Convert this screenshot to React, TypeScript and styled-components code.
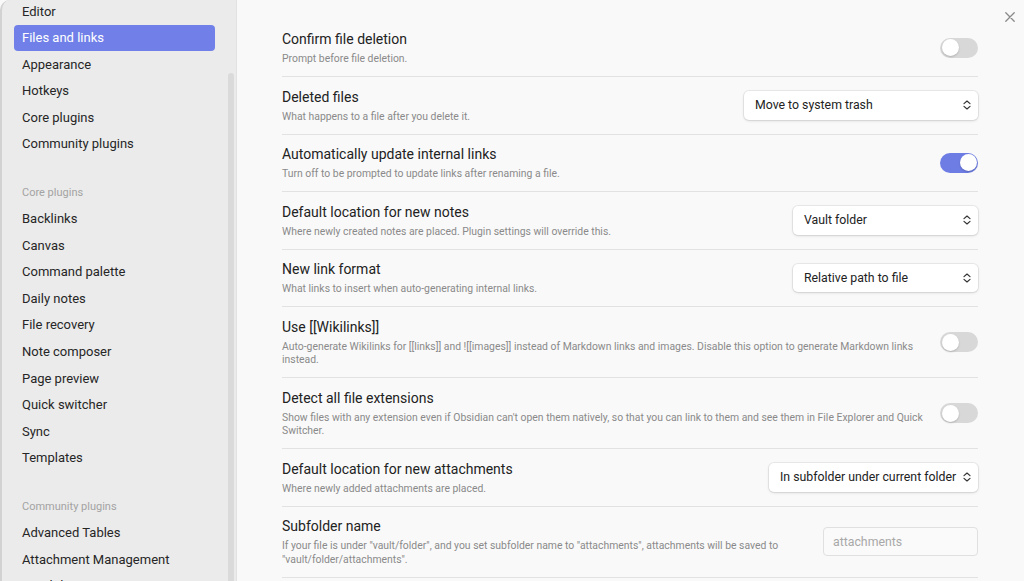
import React from "react";
import styled, { createGlobalStyle } from "styled-components";

const GlobalStyle = createGlobalStyle`
  html, body { margin: 0; padding: 0; }
  body {
    font-family: Roboto, "Noto Sans", "Liberation Sans", sans-serif;
    background: #f9f9f9;
    -webkit-font-smoothing: antialiased;
  }
  * { box-sizing: border-box; }
`;

const Modal = styled.div`
  position: relative;
  display: flex;
  width: 1024px;
  height: 581px;
  overflow: hidden;
  background: #f9f9f9;
`;

const Sidebar = styled.nav`
  position: relative;
  flex: 0 0 237px;
  background: #ebebeb;
  border-left: 2px solid #d2d2d2;
  border-top-left-radius: 10px;
  border-right: 1px solid #e2e2e2;
  padding: 0 21px 0 12px;
  overflow: hidden;
`;

const NavList = styled.div`
  margin-top: -2px;
  display: flex;
  flex-direction: column;
`;

const NavGroup = styled.div`
  display: flex;
  flex-direction: column;
  gap: 0.6px;
  & + & { margin-top: 29.5px; }
`;

const GroupHeader = styled.div`
  font-size: 11px;
  line-height: 14px;
  color: #a3a3a3;
  padding: 0 8px 4.5px;
`;

const NavItem = styled.div<{ $active?: boolean }>`
  height: 26px;
  display: flex;
  align-items: center;
  padding: 0 8px;
  border-radius: 4px;
  font-size: 13px;
  color: ${(p) => (p.$active ? "#ffffff" : "#262626")};
  background: ${(p) => (p.$active ? "#7080e8" : "transparent")};
  white-space: nowrap;
`;

const ScrollThumb = styled.div`
  position: absolute;
  right: 2px;
  top: 73px;
  bottom: 0;
  width: 6px;
  border-radius: 3px 3px 0 0;
  background: #dadada;
`;

const Content = styled.main`
  flex: 1;
  padding: 19.5px 46px 0 45px;
  overflow: hidden;
`;

const Row = styled.div`
  display: flex;
  align-items: center;
  padding: 10.5px 0;
  border-bottom: 1px solid #e2e2e2;
`;

const Info = styled.div`
  flex: 1 1 auto;
  min-width: 0;
  margin-right: 16px;
`;

const Name = styled.div`
  font-size: 14px;
  line-height: 18px;
  color: #222222;
`;

const Desc = styled.div`
  margin-top: 4px;
  font-size: 10.4px;
  line-height: 13.5px;
  color: #8a8a8a;
`;

const Toggle = styled.div<{ $on?: boolean }>`
  position: relative;
  flex: 0 0 38px;
  width: 38px;
  height: 20px;
  border-radius: 10px;
  background: ${(p) => (p.$on ? "#6d7de4" : "#d8d8d8")};
  &::after {
    content: "";
    position: absolute;
    top: 1.5px;
    left: ${(p) => (p.$on ? "19.5px" : "1.5px")};
    width: 17px;
    height: 17px;
    border-radius: 50%;
    background: #ffffff;
    box-shadow: 0 1px 2px rgba(0, 0, 0, 0.18);
  }
`;

const Select = styled.div<{ $w: number }>`
  flex: 0 0 auto;
  width: ${(p) => p.$w}px;
  height: 28.5px;
  display: flex;
  align-items: center;
  justify-content: space-between;
  padding: 0 7px 0 11px;
  background: #ffffff;
  border-radius: 5px;
  box-shadow: 0 0 0 1px rgba(0, 0, 0, 0.06), 0 1px 3px rgba(0, 0, 0, 0.12);
  font-size: 12.3px;
  color: #222222;
  white-space: nowrap;
`;

const TextInput = styled.div`
  flex: 0 0 155px;
  width: 155px;
  height: 29px;
  display: flex;
  align-items: center;
  padding: 0 9px;
  border: 1px solid #e0e0e0;
  border-radius: 4px;
  background: #fafafa;
  font-size: 12.3px;
  color: #a8a8a8;
`;

const CloseButton = styled.div`
  position: absolute;
  top: 12px;
  right: 9px;
  width: 10px;
  height: 10px;
  display: flex;
`;

const Chevrons = () => (
  <svg width="8" height="10" viewBox="0 0 8 10" fill="none" stroke="#333" strokeWidth="1.2" strokeLinecap="round" strokeLinejoin="round">
    <path d="M1 3.6 L4 1 L7 3.6" />
    <path d="M1 6.4 L4 9 L7 6.4" />
  </svg>
);

const Dropdown = ({ w, value }: { w: number; value: string }) => (
  <Select $w={w}>
    <span>{value}</span>
    <Chevrons />
  </Select>
);

type Setting = {
  name: string;
  desc: string;
  control: React.ReactNode;
};

const settings: Setting[] = [
  { name: "Confirm file deletion", desc: "Prompt before file deletion.", control: <Toggle /> },
  { name: "Deleted files", desc: "What happens to a file after you delete it.", control: <Dropdown w={234} value="Move to system trash" /> },
  { name: "Automatically update internal links", desc: "Turn off to be prompted to update links after renaming a file.", control: <Toggle $on /> },
  { name: "Default location for new notes", desc: "Where newly created notes are placed. Plugin settings will override this.", control: <Dropdown w={185} value="Vault folder" /> },
  { name: "New link format", desc: "What links to insert when auto-generating internal links.", control: <Dropdown w={185} value="Relative path to file" /> },
  {
    name: "Use [[Wikilinks]]",
    desc: "Auto-generate Wikilinks for [[links]] and ![[images]] instead of Markdown links and images. Disable this option to generate Markdown links instead.",
    control: <Toggle />,
  },
  {
    name: "Detect all file extensions",
    desc: "Show files with any extension even if Obsidian can't open them natively, so that you can link to them and see them in File Explorer and Quick Switcher.",
    control: <Toggle />,
  },
  { name: "Default location for new attachments", desc: "Where newly added attachments are placed.", control: <Dropdown w={209} value="In subfolder under current folder" /> },
  {
    name: "Subfolder name",
    desc: "If your file is under \"vault/folder\", and you set subfolder name to \"attachments\", attachments will be saved to \"vault/folder/attachments\".",
    control: <TextInput>attachments</TextInput>,
  },
];

const optionsItems = ["Editor", "Files and links", "Appearance", "Hotkeys", "Core plugins", "Community plugins"];
const coreItems = ["Backlinks", "Canvas", "Command palette", "Daily notes", "File recovery", "Note composer", "Page preview", "Quick switcher", "Sync", "Templates"];
const communityItems = ["Advanced Tables", "Attachment Management", "Excalidraw"];

export default function App() {
  return (
    <>
      <GlobalStyle />
      <Modal>
        <Sidebar>
          <NavList>
            <NavGroup>
              {optionsItems.map((it) => (
                <NavItem key={it} $active={it === "Files and links"}>{it}</NavItem>
              ))}
            </NavGroup>
            <NavGroup>
              <GroupHeader>Core plugins</GroupHeader>
              {coreItems.map((it) => (
                <NavItem key={it}>{it}</NavItem>
              ))}
            </NavGroup>
            <NavGroup>
              <GroupHeader>Community plugins</GroupHeader>
              {communityItems.map((it) => (
                <NavItem key={it}>{it}</NavItem>
              ))}
            </NavGroup>
          </NavList>
          <ScrollThumb />
        </Sidebar>
        <Content>
          {settings.map((s) => (
            <Row key={s.name}>
              <Info>
                <Name>{s.name}</Name>
                <Desc>{s.desc}</Desc>
              </Info>
              {s.control}
            </Row>
          ))}
        </Content>
        <CloseButton>
          <svg width="10" height="10" viewBox="0 0 10 10" stroke="#8a8a8a" strokeWidth="1.3" strokeLinecap="round">
            <path d="M0.8 0.8 L9.2 9.2 M9.2 0.8 L0.8 9.2" />
          </svg>
        </CloseButton>
      </Modal>
    </>
  );
}
